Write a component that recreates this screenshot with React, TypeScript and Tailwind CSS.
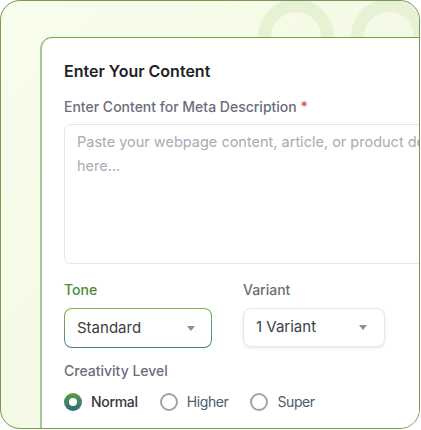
import React from "react";

const font = { fontFamily: "Inter, 'Open Sans', sans-serif" };

function Caret() {
  return (
    <svg width="8" height="5" viewBox="0 0 8 5" className="shrink-0">
      <path d="M0 0 L8 0 L4 5 Z" fill="#8b9098" />
    </svg>
  );
}

function Radio({ checked, label }: { checked?: boolean; label: string }) {
  return (
    <div className="flex items-center gap-[9px]">
      {checked ? (
        <div className="w-[18px] h-[18px] rounded-full bg-gradient-to-b from-[#5a9c3a] to-[#2e6c78] flex items-center justify-center">
          <div className="w-[8px] h-[8px] rounded-full bg-white" />
        </div>
      ) : (
        <div className="w-[18px] h-[18px] rounded-full border-2 border-[#a3a3a3] bg-white" />
      )}
      <span
        className={
          checked
            ? "text-[14px] leading-[20px] font-medium tracking-[-0.3px] text-[#36383c]"
            : "text-[14px] leading-[20px] tracking-[-0.4px] text-[#4f5a6b]"
        }
      >
        {label}
      </span>
    </div>
  );
}

export default function App() {
  return (
    <div className="w-[421px] h-[430px] bg-white" style={font}>
      <div className="relative w-[420px] h-[429px] rounded-[20px] border-[1.5px] border-[#779856] overflow-hidden bg-gradient-to-br from-[#f9fdec] via-[#f5fae6] to-[#ecf6da] pl-[39px] pt-[36px]">
        <div className="absolute left-[257px] top-[-2px] w-[76px] h-[76px] rounded-full border-[13px] border-[#e6f2d3]" />
        <div className="absolute left-[350px] top-[-2px] w-[76px] h-[76px] rounded-full border-[13px] border-[#e6f2d3]" />
        <div className="relative w-[440px] h-[420px] bg-white rounded-tl-[12px] border-t-[1.5px] border-l-2 border-t-[#70a641] border-l-[#a6c69c] pt-[21px] pl-[22px]">
          <div className="text-[16px] leading-[24px] font-semibold text-[#1f2126]">
            Enter Your Content
          </div>
          <div className="mt-[14px] text-[14px] leading-[20px] font-medium text-[#6b6d7a]">
            Enter Content for Meta Description <span className="text-[#e5484d]">*</span>
          </div>
          <div className="mt-[7px] w-[460px] h-[140px] rounded-[7px] border border-[#e3e5ea] pl-[12px] pt-[5px] text-[14.5px] leading-[24px] text-[#a7abb4] whitespace-nowrap">
            <div>Paste your webpage content, article, or product description</div>
            <div>here...</div>
          </div>
          <div className="mt-[16px] flex gap-[31px]">
            <div className="w-[148px]">
              <div className="text-[14px] leading-[20px] font-medium text-[#4a8a3a]">Tone</div>
              <div className="mt-[8px] h-[40px] rounded-[8px] p-px bg-gradient-to-b from-[#7cb84a] to-[#4a7e8c]">
                <div className="h-full w-full rounded-[7px] bg-white flex items-center justify-between pl-[12px] pr-[16px]">
                  <span className="text-[15px] text-[#3b3e44]">Standard</span>
                  <Caret />
                </div>
              </div>
            </div>
            <div className="w-[142px]">
              <div className="text-[14px] leading-[20px] font-medium text-[#6b6d75]">Variant</div>
              <div className="mt-[8px] h-[39px] rounded-[8px] border border-[#e6e7ea] shadow-[0_1px_3px_rgba(0,0,0,0.1)] bg-white flex items-center justify-between pl-[12px] pr-[17px]">
                <span className="text-[15px] text-[#3b3e44]">1 Variant</span>
                <Caret />
              </div>
            </div>
          </div>
          <div className="mt-[13px] text-[14px] leading-[20px] font-medium text-[#6b6d7a]">
            Creativity Level
          </div>
          <div className="mt-[11px] flex items-center gap-[22px]">
            <Radio checked label="Normal" />
            <Radio label="Higher" />
            <Radio label="Super" />
          </div>
        </div>
      </div>
    </div>
  );
}
